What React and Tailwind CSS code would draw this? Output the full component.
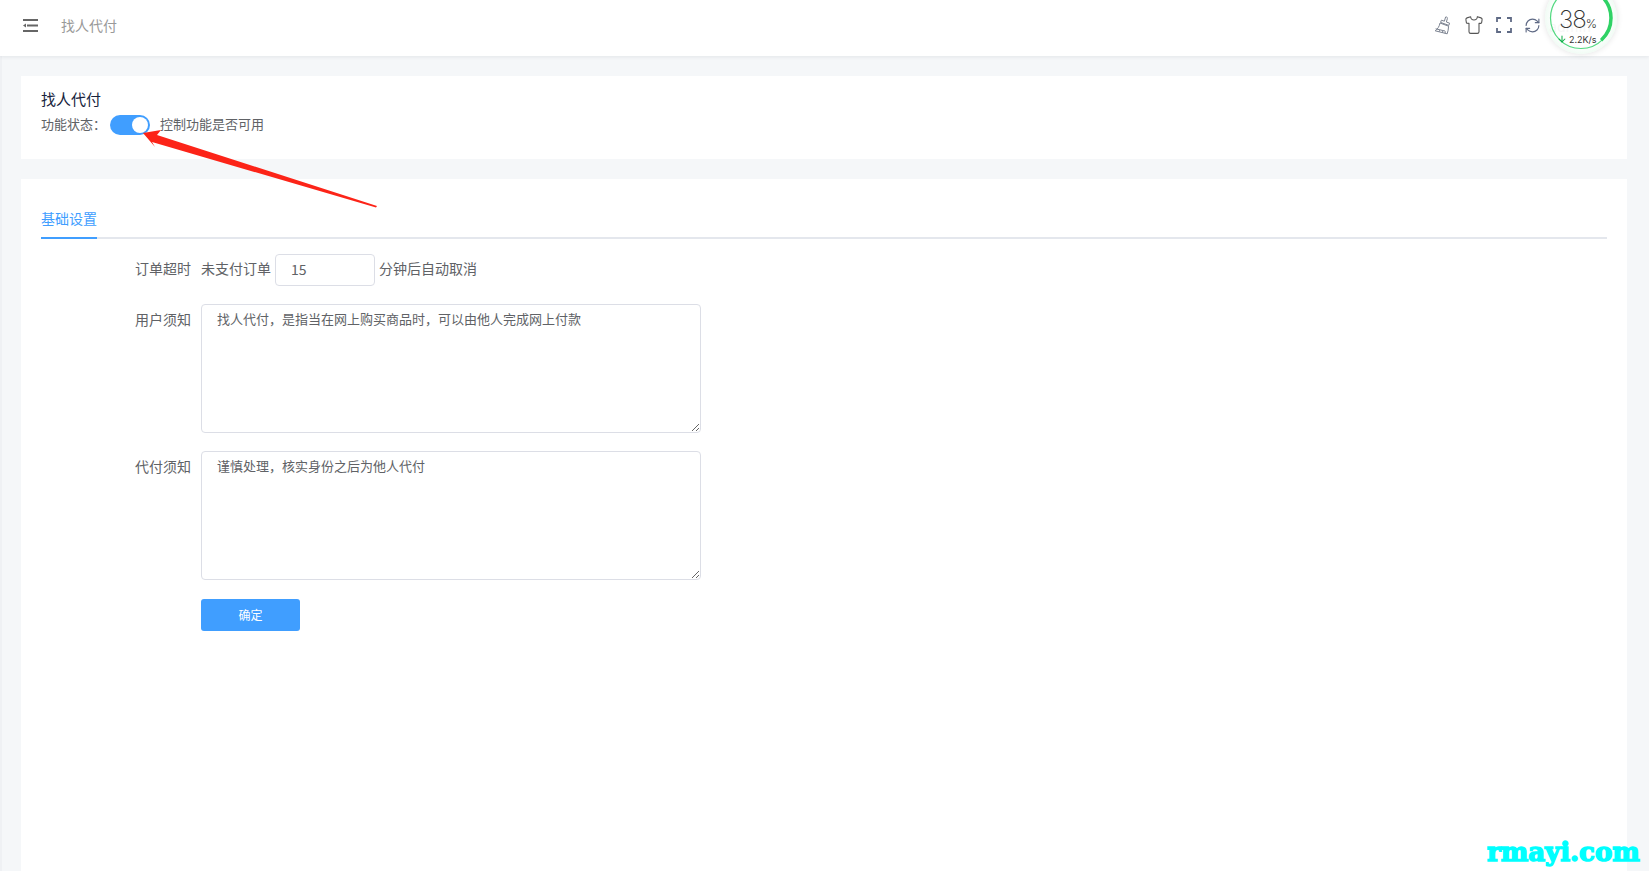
import React from 'react';
import { Shirt, RefreshCw, ArrowDown } from 'lucide-react';

const BrushIcon = () => (
    <svg width="18" height="19" viewBox="0 0 18 19" fill="none" stroke="#7b8290" strokeWidth="1">
        <path d="M11.6 1 C12.6 0.6 13.6 1.4 13.4 2.4 L12.4 6 L15.6 7.2 L14.8 9.4 L6.6 6.4 L7.4 4.2 L10.4 5.2 Z" />
        <path d="M6 7 L14.6 10.2 C14.4 13 14 15.6 13.2 17.8 L1.2 14.8 C3.6 13.2 5.4 10.4 6 7 Z" />
        <path d="M1.6 12.8 L11 15 M5 15.8 L5.6 14.2 M8.4 16.6 L8.8 15 M11 17.2 L11.4 15.4" />
    </svg>
);

const MaximizeIcon = () => (
    <svg width="16" height="16" viewBox="0 0 16 16" fill="none" stroke="#5f6a85" strokeWidth="1.8">
        <path d="M1 5 V1 H5 M11 1 H15 V5 M15 11 V15 H11 M5 15 H1 V11" />
    </svg>
);

const MenuFoldIcon = () => (
    <svg width="16" height="14" viewBox="0 0 16 14" fill="#666">
        <rect x="0" y="0" width="15" height="2" />
        <rect x="4" y="5.5" width="11" height="2" />
        <rect x="0" y="11" width="15" height="2" />
        <path d="M0 6.5 L3 4.5 V8.5 Z" />
    </svg>
);

// 38% ring that hangs over the top right of the header
const SpeedBall = () => (
    <div className="absolute left-[1545px] top-[-18px] z-20 w-[72px] h-[72px] rounded-full bg-[radial-gradient(circle,rgba(255,255,255,0.82)_55%,rgba(225,248,233,0.9)_85%,#ffffff_90%)] shadow-[0_0_6px_rgba(0,0,0,0.12)]">
        <svg width="72" height="72" viewBox="0 0 72 72" className="absolute left-0 top-0" fill="none">
            <circle cx="36" cy="36" r="30.5" stroke="#52d980" strokeWidth="1.2" />
            <circle
                cx="36"
                cy="36"
                r="30"
                stroke="#2fd265"
                strokeWidth="3.5"
                strokeDasharray="72 200"
                transform="rotate(-90 36 36)"
            />
        </svg>
        <div className="absolute left-[14px] top-[26px] flex items-baseline text-[#333] leading-none">
            <span className="text-[24px] font-extralight font-['Inter',sans-serif] tracking-[-1px]">38</span>
            <span className="text-[12px] font-light font-['Inter',sans-serif]">%</span>
        </div>
        <div className="absolute left-[12px] top-[52px] flex items-center text-[9px] leading-none text-[#333] font-['Inter',sans-serif]">
            <ArrowDown size={10} strokeWidth={2.5} color="#0fae48" />
            <span className="ml-[2px]">2.2K/s</span>
        </div>
    </div>
);

const FormRow = ({ label, children, labelClass = '' }) => (
    <div className="flex">
        <div className={`w-[150px] mr-[10px] text-right text-[14px] text-[#606266] ${labelClass}`}>{label}</div>
        {children}
    </div>
);

const NoticeBox = ({ text }) => (
    <textarea
        defaultValue={text}
        className="w-[500px] h-[129px] rounded-[4px] border border-[#dcdee6] bg-white px-[15px] pt-[4px] text-[13px] leading-[20px] text-[#606266] outline-none"
    />
);

const App = () => {
    return (
        <div className="relative h-[871px] w-full overflow-hidden bg-[#f5f7f9] font-['Noto_Sans_CJK_SC',sans-serif]">
            <header className="relative z-10 flex h-[56px] items-center bg-white pb-[4px] pl-[23px] shadow-[0_1px_4px_rgba(0,21,41,0.08)]">
                <MenuFoldIcon />
                <span className="ml-[22px] pb-[2px] text-[14px] text-[#999]">找人代付</span>
                <div className="mb-[2px] ml-[1317px] flex items-center gap-[12px]">
                    <BrushIcon />
                    <Shirt size={20} strokeWidth={1.3} color="#555" />
                    <MaximizeIcon />
                    <RefreshCw size={17} strokeWidth={1.6} color="#5f6a85" />
                </div>
                <span className="ml-[8px] text-[14px] text-[#ccc]">admin</span>
            </header>

            <main className="flex h-[815px] flex-col gap-[20px] border-l-2 border-[#eff1f4] pl-[19px] pr-[22px] pt-[20px]">
                <section className="h-[83px] bg-white px-[20px] pt-[12px]">
                    <h2 className="text-[15px] leading-[22px] text-[#17233d]">找人代付</h2>
                    <div className="mt-[5px] flex items-center text-[13px] leading-[16px] text-[#606266]">
                        <span className="w-[69px] pb-[3px]">功能状态：</span>
                        <span className="relative h-[20px] w-[40px] rounded-full bg-[#409eff]">
                            <span className="absolute left-[22px] top-[2px] h-[16px] w-[16px] rounded-full bg-white" />
                        </span>
                        <span className="ml-[10px] pb-[3px]">控制功能是否可用</span>
                    </div>
                </section>

                <section className="flex-1 bg-white px-[20px] pt-[26px]">
                    <div className="border-b-2 border-[#e4e7ed]">
                        <span className="-mb-[2px] inline-block border-b-2 border-[#409eff] pb-[9px] text-[14px] leading-[20px] text-[#409eff]">基础设置</span>
                    </div>

                    <div className="mt-[15px] flex flex-col gap-[18px]">
                        <FormRow label="订单超时" labelClass="leading-[28px]">
                            <div className="flex items-center text-[14px] text-[#606266]">
                                <span className="pb-[3px]">未支付订单</span>
                                <input
                                    defaultValue="15"
                                    className="mx-[4px] h-[32px] w-[100px] rounded-[4px] border border-[#dcdee6] px-[15px] pb-[2px] text-[#606266] outline-none"
                                />
                                <span className="pb-[3px]">分钟后自动取消</span>
                            </div>
                        </FormRow>
                        <FormRow label="用户须知" labelClass="leading-[30px]">
                            <NoticeBox text="找人代付，是指当在网上购买商品时，可以由他人完成网上付款" />
                        </FormRow>
                        <FormRow label="代付须知" labelClass="leading-[30px]">
                            <NoticeBox text="谨慎处理，核实身份之后为他人代付" />
                        </FormRow>
                        <div className="mt-[1px]">
                            <FormRow label="">
                                <button className="h-[32px] w-[99px] rounded-[3px] bg-[#409eff] text-[12px] text-white">确定</button>
                            </FormRow>
                        </div>
                    </div>
                </section>
            </main>

            <SpeedBall />

            {/* red annotation arrow drawn on top of the screenshot */}
            <svg className="absolute left-0 top-0 z-20 pointer-events-none" width="400" height="220">
                <path d="M143 133 L161 130 L157 135 L377 206 L376 207.500 L152 142 L155 147 Z" fill="#fc2418" />
            </svg>

            <div className="absolute left-[1487px] top-[836px] z-20 text-[26px] font-bold leading-[32px] text-[#00ffff] [-webkit-text-stroke:1.5px_#00ffff] font-['DejaVu_Serif',serif]">
                rmayi.com
            </div>
        </div>
    );
};

export default App;
